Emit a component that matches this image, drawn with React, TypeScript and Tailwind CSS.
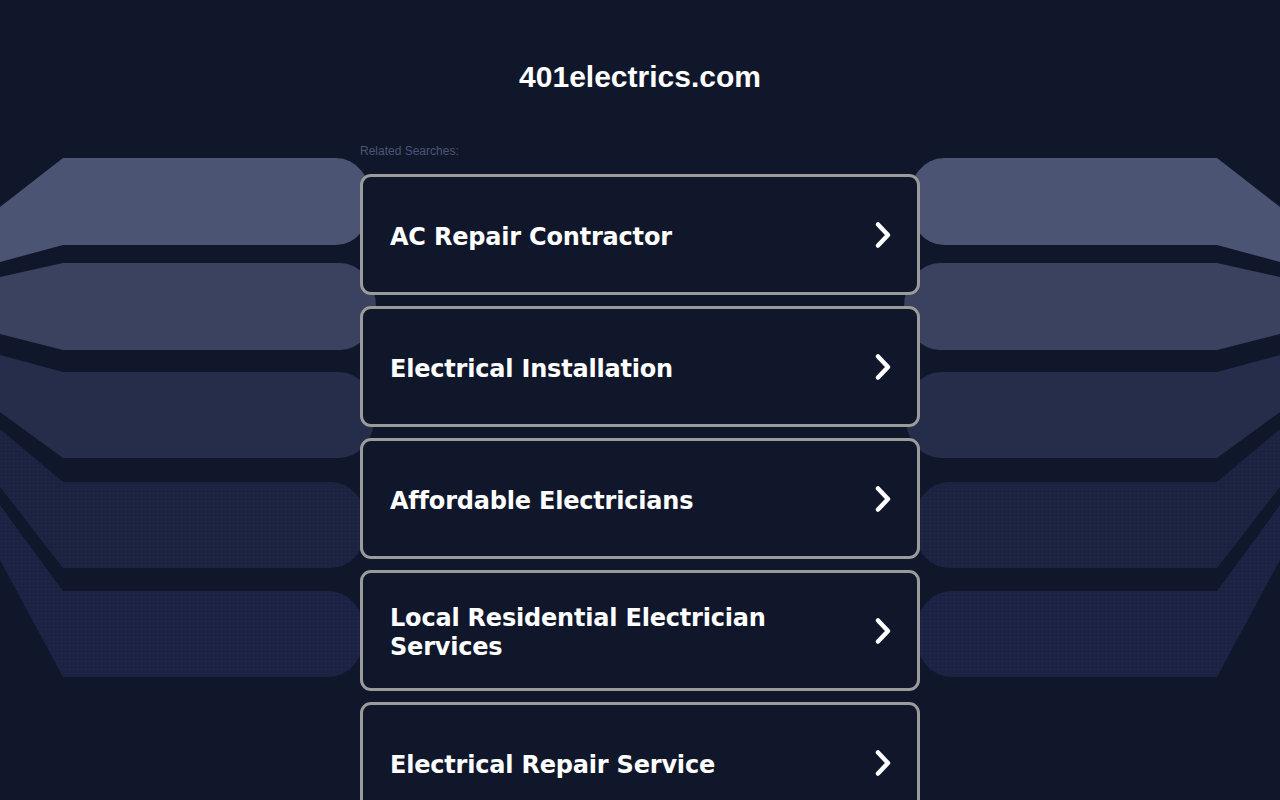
import { FC } from 'react';

interface Band {
	top: number,
	bottom: number,
	edgeTop: number,
	edgeBottom: number,
	end: number,
	fill: string,
	dotted?: boolean
}

const bands: Band[] = [
	{ top: 158, bottom: 245, edgeTop: 207, edgeBottom: 262, end: 372, fill: '#4b5573' },
	{ top: 263, bottom: 350, edgeTop: 277, edgeBottom: 334, end: 376, fill: '#3a4260' },
	{ top: 372, bottom: 458, edgeTop: 355, edgeBottom: 412, end: 375, fill: '#252d4b' },
	{ top: 482, bottom: 568, edgeTop: 429, edgeBottom: 487, end: 367, fill: '#1c2341', dotted: true },
	{ top: 591, bottom: 677, edgeTop: 505, edgeBottom: 560, end: 365, fill: '#1b2242', dotted: true },
];

const searches = [
	'AC Repair Contractor',
	'Electrical Installation',
	'Affordable Electricians',
	'Local Residential Electrician Services',
	'Electrical Repair Service',
];

// one band: slanted tail on the outside, rounded end towards the middle
const bandPath = (b: Band) => {
	const rx = 36;
	const ry = (b.bottom - b.top) / 2;
	return `M0 ${b.edgeTop} L63 ${b.top} L${b.end - rx} ${b.top} A${rx} ${ry} 0 0 1 ${b.end - rx} ${b.bottom} L63 ${b.bottom} L0 ${b.edgeBottom} Z`;
};

const Bands: FC = () => (
	<>
		{bands.map((b, i) => (
			<g key={i}>
				<path d={bandPath(b)} fill={b.fill} />
				{b.dotted ? <path d={bandPath(b)} fill="url(#dots)" /> : null}
			</g>
		))}
	</>
);

const Backdrop: FC = () => (
	<svg className="absolute left-0 top-0 w-[1280px] h-[800px] pointer-events-none" viewBox="0 0 1280 800">
		<defs>
			<pattern id="dots" width="4" height="4" patternUnits="userSpaceOnUse">
				<rect x="1" y="1" width="1" height="1" fill="#263060" opacity="0.6" />
			</pattern>
		</defs>
		<Bands />
		<g transform="translate(1280 0) scale(-1 1)">
			<Bands />
		</g>
	</svg>
);

const Chevron: FC = () => (
	<svg width="20" height="32" viewBox="0 0 20 32" fill="none" stroke="white" strokeWidth="4.5" strokeLinecap="round" strokeLinejoin="round" className="shrink-0">
		<polyline points="5 5.5 15 16 5 26.5" />
	</svg>
);

const App: FC = () => {
	return (
		<div className="relative min-h-screen overflow-hidden bg-[#11172b]">
			<Backdrop />
			<div className="relative w-[560px] mx-auto pt-[59px]">
				<h1 className="text-center text-white font-bold text-[30px] leading-[36px] font-['Liberation_Sans',Arial,sans-serif]">
					401electrics.com
				</h1>
				<div className="mt-[48px] text-[12px] leading-[16px] text-[#4b5577] font-['Liberation_Sans',Arial,sans-serif]">
					Related Searches:
				</div>
				<div className="mt-[15px] flex flex-col gap-[11px]">
					{searches.map((s) => (
						<a key={s} href="#" className="flex items-center justify-between gap-4 h-[121px] pl-[27px] pr-[24px] border-[3px] border-[#9b9b9b] rounded-[11px] bg-[#11172b]">
							<span className="pt-[5px] text-white font-bold text-[24px] leading-[29px] tracking-[-0.2px] font-['DejaVu_Sans',Verdana,sans-serif]">{s}</span>
							<Chevron />
						</a>
					))}
				</div>
			</div>
		</div>
	);
};

export default App;
